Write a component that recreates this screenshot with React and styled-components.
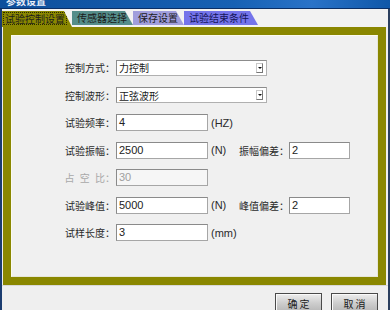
import React from "react";
import styled, { createGlobalStyle } from "styled-components";

const GlobalStyle = createGlobalStyle`
  body {
    margin: 0;
    background: #efefef;
    font-family: "Noto Sans CJK SC", "Noto Sans", sans-serif;
  }
`;

const tabs = [
  { label: "试验控制设置", color: "#8a8700", width: 70, active: true },
  { label: "传感器选择", color: "#558d8a", width: 61 },
  { label: "保存设置", color: "#a09edc", width: 51 },
  { label: "试验结束条件", color: "#7474ea", width: 74, dark: true },
];

const Field = ({ value, width = 92, disabled }) => (
  <Input $width={width} $disabled={disabled}>
    {value}
  </Input>
);

const Dropdown = ({ value }) => (
  <Select>
    <span>{value}</span>
    <Arrow />
  </Select>
);

const App = () => {
  return (
    <Window>
      <GlobalStyle />
      <TitleBar>
        <TitleText>参数设置</TitleText>
      </TitleBar>
      <Body>
        <TabStrip>
          {tabs.map((t) => (
            <Tab
              key={t.label}
              $color={t.color}
              $width={t.width}
              $active={t.active}
              $dark={t.dark}
            >
              {t.active ? <Focus>{t.label}</Focus> : t.label}
            </Tab>
          ))}
        </TabStrip>
        <Frame>
          <Inner>
            <Form>
              <Row>
                <Label>控制方式：</Label>
                <Dropdown value="力控制" />
              </Row>
              <Row>
                <Label>控制波形：</Label>
                <Dropdown value="正弦波形" />
              </Row>
              <Row>
                <Label>试验频率：</Label>
                <Field value="4" />
                <Unit>(HZ)</Unit>
              </Row>
              <Row>
                <Label>试验振幅：</Label>
                <Field value="2500" />
                <Unit>(N)</Unit>
                <SideLabel>振幅偏差：</SideLabel>
                <Field value="2" width={61} />
              </Row>
              <Row>
                <Label $disabled>占 空 比：</Label>
                <Field value="30" disabled />
              </Row>
              <Row>
                <Label>试验峰值：</Label>
                <Field value="5000" />
                <Unit>(N)</Unit>
                <SideLabel>峰值偏差：</SideLabel>
                <Field value="2" width={61} />
              </Row>
              <Row>
                <Label>试样长度：</Label>
                <Field value="3" />
                <Unit>(mm)</Unit>
              </Row>
            </Form>
          </Inner>
        </Frame>
        <ButtonBar>
          <Button>确 定</Button>
          <Button>取 消</Button>
        </ButtonBar>
      </Body>
    </Window>
  );
};

export default App;

// Styled Components

const Window = styled.div`
  width: 390px;
  height: 310px;
  display: flex;
  flex-direction: column;
  overflow: hidden;
  background: #efefef;
`;

const TitleBar = styled.div`
  height: 9px;
  flex-shrink: 0;
  overflow: hidden;
  background: linear-gradient(90deg, #0d4f9c 0%, #1761b4 60%, #2a73c8 80%, #0f57a8 100%);
  border-bottom: 1px solid #0a2f66;
  box-sizing: border-box;
  padding-left: 6px;
`;

const TitleText = styled.div`
  margin-top: -6px;
  font-size: 10px;
  font-weight: bold;
  color: #e8eef8;
  line-height: 14px;
`;

const Body = styled.div`
  flex: 1;
  display: flex;
  flex-direction: column;
  border-left: 2px solid #1b3c70;
  border-right: 2px solid #2b3f5e;
`;

const TabStrip = styled.div`
  height: 18px;
  flex-shrink: 0;
  display: flex;
  align-items: flex-end;
  background: #f2f2f2;
`;

const Tab = styled.div`
  width: ${({ $width }) => $width}px;
  height: ${({ $active }) => ($active ? 16 : 14)}px;
  margin-bottom: ${({ $active }) => ($active ? 0 : 2)}px;
  box-sizing: border-box;
  padding-left: ${({ $active }) => ($active ? 2 : 5)}px;
  background: ${({ $color }) => $color};
  clip-path: polygon(0 0, calc(100% - 8px) 0, 100% 100%, 0 100%);
  color: ${({ $dark }) => ($dark ? "#15155a" : "#1c1c1c")};
  font-size: 10px;
  line-height: 14px;
  white-space: nowrap;
`;

const Focus = styled.span`
  display: inline-block;
  margin-top: 2px;
  padding: 0 1px;
  line-height: 11px;
  outline: 1px dotted #2a2a00;
`;

const Frame = styled.div`
  height: 258px;
  flex-shrink: 0;
  margin: 0 2px 0 1px;
  box-sizing: border-box;
  padding: 8px;
  background: #8a8700;
`;

const Inner = styled.div`
  height: 100%;
  box-sizing: border-box;
  background: #f0f0f0;
  border: 1px solid #fbfbf0;
  border-right-color: #e6e6d8;
  border-bottom-color: #e6e6d8;
`;

const Form = styled.div`
  display: flex;
  flex-direction: column;
  gap: 10.5px;
  padding: 23px 0 0 52px;
`;

const Row = styled.div`
  display: flex;
  align-items: center;
  height: 17px;
`;

const Label = styled.div`
  width: 52px;
  padding-right: 1px;
  box-sizing: border-box;
  display: flex;
  justify-content: flex-end;
  white-space: pre;
  word-spacing: ${({ $disabled }) => ($disabled ? 3 : 0)}px;
  font-size: 10px;
  color: ${({ $disabled }) => ($disabled ? "#a8a8a8" : "#2a2a2a")};
`;

const SideLabel = styled(Label)`
  width: 48px;
  padding-right: 0;
`;

const Input = styled.div`
  width: ${({ $width }) => $width}px;
  height: 17px;
  flex-shrink: 0;
  box-sizing: border-box;
  border: 1px solid #a6a6a6;
  border-top-color: #8a8a8a;
  border-left-color: #8a8a8a;
  background: ${({ $disabled }) => ($disabled ? "#f6f6f6" : "#ffffff")};
  color: ${({ $disabled }) => ($disabled ? "#a0a0a0" : "#222")};
  font-family: "Liberation Sans", Arial, sans-serif;
  font-size: 11px;
  line-height: 15px;
  padding-left: 2px;
`;

const Select = styled.div`
  width: 151px;
  height: 16px;
  box-sizing: border-box;
  display: flex;
  align-items: center;
  justify-content: space-between;
  border: 1px solid #8c8c8c;
  border-right-color: #b0b0b0;
  border-bottom-color: #b0b0b0;
  background: #fff;
  padding: 0 3px 0 2px;
  font-size: 10px;
  color: #1a1a1a;
`;

const Arrow = styled.span`
  width: 7px;
  height: 10px;
  box-sizing: border-box;
  border: 1px solid #c8c8c8;
  border-right-color: #777;
  border-bottom-color: #777;
  position: relative;

  &::after {
    content: "";
    position: absolute;
    left: 1px;
    top: 3px;
    border-left: 2px solid transparent;
    border-right: 2px solid transparent;
    border-top: 2px solid #111;
  }
`;

const Unit = styled.div`
  width: 33px;
  flex-shrink: 0;
  padding-left: 3px;
  box-sizing: border-box;
  font-family: "Liberation Sans", Arial, sans-serif;
  font-size: 11px;
  color: #2a2a2a;
`;

const ButtonBar = styled.div`
  display: flex;
  justify-content: flex-end;
  gap: 9px;
  padding: 7px 10px 0 0;
  border-top: 1px solid #d8d8d8;
`;

const Button = styled.button`
  width: 47px;
  height: 21px;
  border: 1px solid #4a4a4a;
  background: linear-gradient(180deg, #eeeeee 0%, #cfcfcf 45%, #b4b4b4 100%);
  box-shadow: inset 1px 1px 0 #fafafa;
  font-family: "Noto Sans CJK SC", sans-serif;
  font-size: 10px;
  color: #1a1a1a;
  padding: 0;
  cursor: pointer;
`;
